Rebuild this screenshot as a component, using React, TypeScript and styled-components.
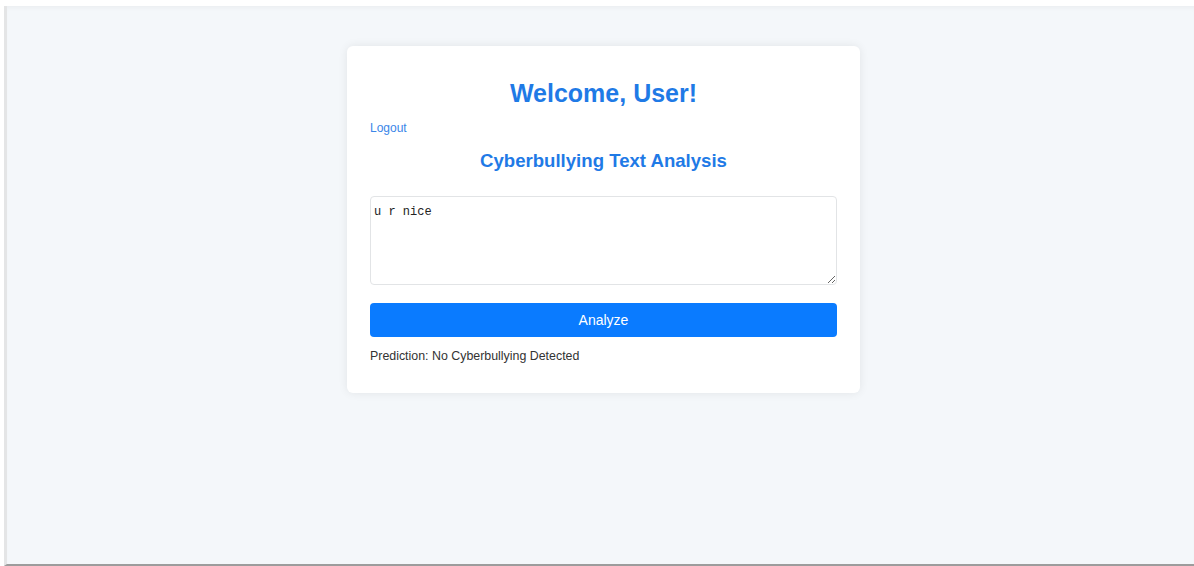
import React, { useState } from 'react';
import styled, { createGlobalStyle } from 'styled-components';

const GlobalStyle = createGlobalStyle`
  html, body {
    margin: 0;
    padding: 0;
    background: #ffffff;
    overflow: hidden;
  }
  * {
    box-sizing: border-box;
  }
`;

const Frame = styled.div`
  padding: 6px 0 0 4px;
  height: 566px;
`;

const Page = styled.main`
  height: 560px;
  background: #f4f7fa;
  border-left: 3px solid #e4e5e6;
  border-bottom: 2px solid #9c9c9c;
  box-shadow: inset 0 4px 4px -2px rgba(0, 0, 0, 0.04);
  padding: 40px 0 0 6px;
  font-family: "Liberation Sans", Arial, sans-serif;
`;

const Card = styled.section`
  width: 513px;
  margin: 0 auto;
  background: #ffffff;
  border-radius: 6px;
  box-shadow: 0 0 10px rgba(0, 0, 0, 0.08);
  padding: 33px 23px 30px;
  display: flex;
  flex-direction: column;
`;

const Title = styled.h1`
  margin: 0;
  font-size: 25px;
  line-height: 28px;
  font-weight: 700;
  color: #1f7ae6;
  text-align: center;
`;

const LogoutLink = styled.a`
  margin-top: 14px;
  align-self: flex-start;
  font-size: 12px;
  line-height: 14px;
  color: #3a86e8;
  text-decoration: none;
  cursor: pointer;
`;

const Subtitle = styled.h2`
  margin: 15px 0 0;
  font-size: 18.6px;
  line-height: 21px;
  font-weight: 700;
  color: #1f7ae6;
  text-align: center;
`;

const TextBox = styled.textarea`
  display: block;
  margin-top: 25px;
  width: 100%;
  height: 89px;
  padding: 8px 3px;
  border: 1px solid #e2e4e6;
  border-radius: 4px;
  font-family: "Liberation Mono", "DejaVu Sans Mono", monospace;
  font-size: 12px;
  color: #222;
  resize: vertical;
  outline: none;
`;

const AnalyzeButton = styled.button`
  margin-top: 18px;
  width: 100%;
  height: 34px;
  border: none;
  border-radius: 4px;
  background: #0a7bff;
  color: #ffffff;
  font-family: "Liberation Sans", Arial, sans-serif;
  font-size: 14px;
  cursor: pointer;
`;

const Result = styled.p`
  margin: 12px 0 0;
  font-size: 12.4px;
  line-height: 14px;
  color: #333333;
`;

export default function App() {
  const [text, setText] = useState('u r nice');

  return (
    <>
      <GlobalStyle />
      <Frame>
        <Page>
          <Card>
            <Title>Welcome, User!</Title>
            <LogoutLink href="#">Logout</LogoutLink>
            <Subtitle>Cyberbullying Text Analysis</Subtitle>
            <TextBox value={text} onChange={(e) => setText(e.target.value)} />
            <AnalyzeButton type="button">Analyze</AnalyzeButton>
            <Result>Prediction: No Cyberbullying Detected</Result>
          </Card>
        </Page>
      </Frame>
    </>
  );
}
